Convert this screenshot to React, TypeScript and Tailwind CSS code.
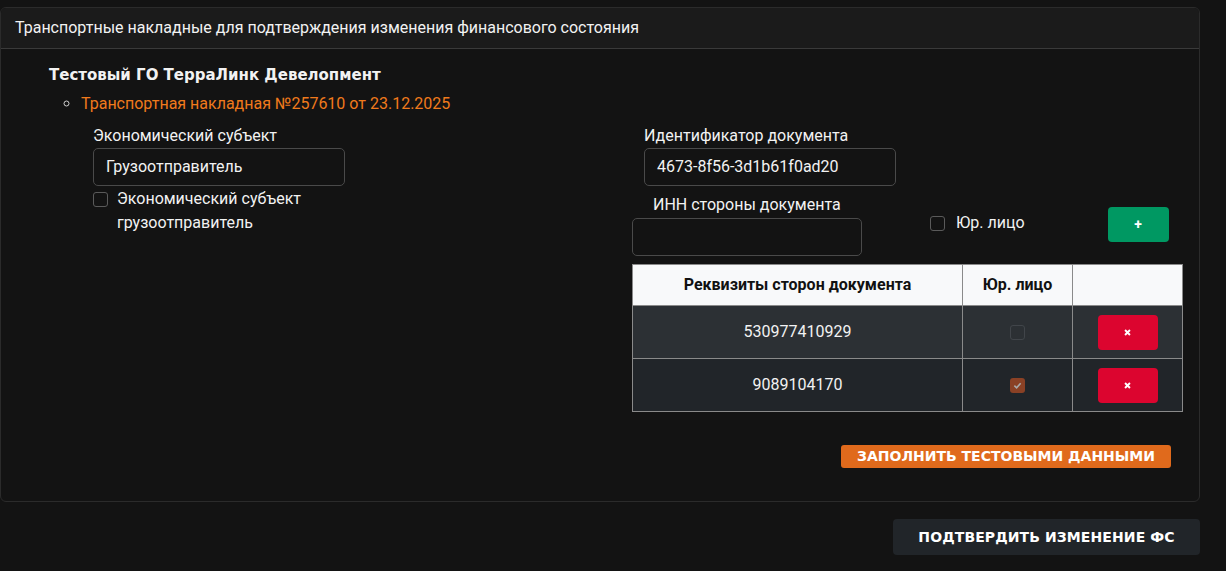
import React from "react";

const body = { fontFamily: "Roboto, 'Liberation Sans', sans-serif" };
const heavy = { fontFamily: "'DejaVu Sans', 'Open Sans', sans-serif" };

function Box({ checked = false, dim = false }: { checked?: boolean; dim?: boolean }) {
  if (checked) {
    return (
      <span className="flex h-[15px] w-[15px] items-center justify-center rounded-[3px] bg-[#8a4125]">
        <svg width="9" height="9" viewBox="0 0 10 10">
          <path d="M1.5 5.2 L4 7.5 L8.5 2.5" stroke="#a9a9a9" strokeWidth="1.8" fill="none" />
        </svg>
      </span>
    );
  }
  return (
    <span
      className={`block h-[15px] w-[15px] rounded-[3px] border ${dim ? "border-[#41454a]" : "border-[#5a5a5a]"}`}
    />
  );
}

function RemoveButton() {
  return (
    <button className="flex h-[35px] w-[60px] items-center justify-center rounded-[4px] bg-[#dc052f]">
      <svg width="7" height="7" viewBox="0 0 8 8">
        <path d="M1.2 1.2 L6.8 6.8 M6.8 1.2 L1.2 6.8" stroke="#fff" strokeWidth="2.2" />
      </svg>
    </button>
  );
}

const parties = [
  { inn: "530977410929", legal: false, bg: "bg-[#2c3034]" },
  { inn: "9089104170", legal: true, bg: "bg-[#212529]" },
];

export default function App() {
  return (
    <div className="min-h-[571px] w-[1226px] bg-[#131313] pt-[7px] text-[#f2f2f2]" style={body}>
      <section className="w-[1200px] overflow-hidden rounded-[6px] border border-[#2b2b2b] bg-[#131313]">
        <header className="flex h-[41px] items-center border-b border-[#3a3a3a] bg-[#1b1b1b] px-[14px] text-[16px]">
          Транспортные накладные для подтверждения изменения финансового состояния
        </header>

        <div className="pb-[33px] pl-[48px] pr-[16px] pt-[16px]">
          <h3 className="text-[15px] font-bold leading-[20px]" style={heavy}>
            Тестовый ГО ТерраЛинк Девелопмент
          </h3>
          <ul className="mt-[9px] list-[circle] pl-[32px] text-[16px] leading-[20px] text-[#f07a1c] marker:text-[#d0d0d0]">
            <li>Транспортная накладная №257610 от 23.12.2025</li>
          </ul>

          <div className="mt-[12px] flex">
            {/* left column */}
            <div className="ml-[44px] w-[252px]">
              <label className="block text-[16px] leading-[20px]">Экономический субъект</label>
              <div className="mt-[2px] flex h-[38px] items-center rounded-[5px] border border-[#4a4a4a] px-[12px] text-[16px]">
                Грузоотправитель
              </div>
              <div className="mt-[5px] flex items-start gap-[9px]">
                <span className="mt-[1px]">
                  <Box />
                </span>
                <span className="text-[16px] leading-[24px] -mt-[4px]">
                  Экономический субъект
                  <br />
                  грузоотправитель
                </span>
              </div>
            </div>

            {/* right column */}
            <div className="ml-[287px] w-[551px]">
              <div className="pl-[12px]">
                <label className="block text-[16px] leading-[20px]">Идентификатор документа</label>
                <div className="mt-[2px] flex h-[38px] w-[252px] items-center rounded-[5px] border border-[#4a4a4a] px-[12px] text-[16px]">
                  4673-8f56-3d1b61f0ad20
                </div>
              </div>

              <div className="mt-[9px] flex items-start">
                <div className="w-[230px]">
                  <label className="block pl-[21px] text-[16px] leading-[20px]">ИНН стороны документа</label>
                  <div className="mt-[3px] h-[38px] rounded-[5px] border border-[#4a4a4a]" />
                </div>
                <div className="ml-[68px] mt-[18px] flex h-[20px] items-center gap-[11px]">
                  <Box />
                  <span className="text-[16px] leading-[20px]">Юр. лицо</span>
                </div>
                <button
                  className="ml-[83px] mt-[12px] flex h-[35px] w-[61px] items-center justify-center rounded-[4px] bg-[#009862] text-[14px] font-bold text-white"
                >
                  +
                </button>
              </div>

              <table className="mt-[8px] w-[551px] border-collapse text-center">
                <thead>
                  <tr className="h-[41px] bg-[#f8f9fa] text-[16px] font-bold text-[#111]">
                    <th className="w-[330px] border border-[#8a8a8a] font-bold">Реквизиты сторон документа</th>
                    <th className="w-[110px] border border-[#8a8a8a] font-bold">Юр. лицо</th>
                    <th className="border border-[#8a8a8a]" />
                  </tr>
                </thead>
                <tbody>
                  {parties.map((p) => (
                    <tr key={p.inn} className={`h-[53px] ${p.bg} text-[16px]`}>
                      <td className="border border-[#8a8a8a]">{p.inn}</td>
                      <td className="border border-[#8a8a8a]">
                        <div className="flex justify-center">
                          <Box checked={p.legal} dim />
                        </div>
                      </td>
                      <td className="border border-[#8a8a8a]">
                        <div className="flex justify-center">
                          <RemoveButton />
                        </div>
                      </td>
                    </tr>
                  ))}
                </tbody>
              </table>

              <div className="mt-[33px] flex justify-end pr-[12px]">
                <button
                  className="flex h-[23px] w-[330px] items-center justify-center rounded-[3px] bg-[#e06a1c] text-[14px] font-bold text-white"
                  style={heavy}
                >
                  ЗАПОЛНИТЬ ТЕСТОВЫМИ ДАННЫМИ
                </button>
              </div>
            </div>
          </div>
        </div>
      </section>

      <div className="mt-[17px] flex w-[1200px] justify-end">
        <button
          className="flex h-[36px] w-[307px] items-center justify-center rounded-[4px] bg-[#212529] text-[14px] font-bold tracking-[0.1px] text-white"
          style={heavy}
        >
          ПОДТВЕРДИТЬ ИЗМЕНЕНИЕ ФС
        </button>
      </div>
    </div>
  );
}
